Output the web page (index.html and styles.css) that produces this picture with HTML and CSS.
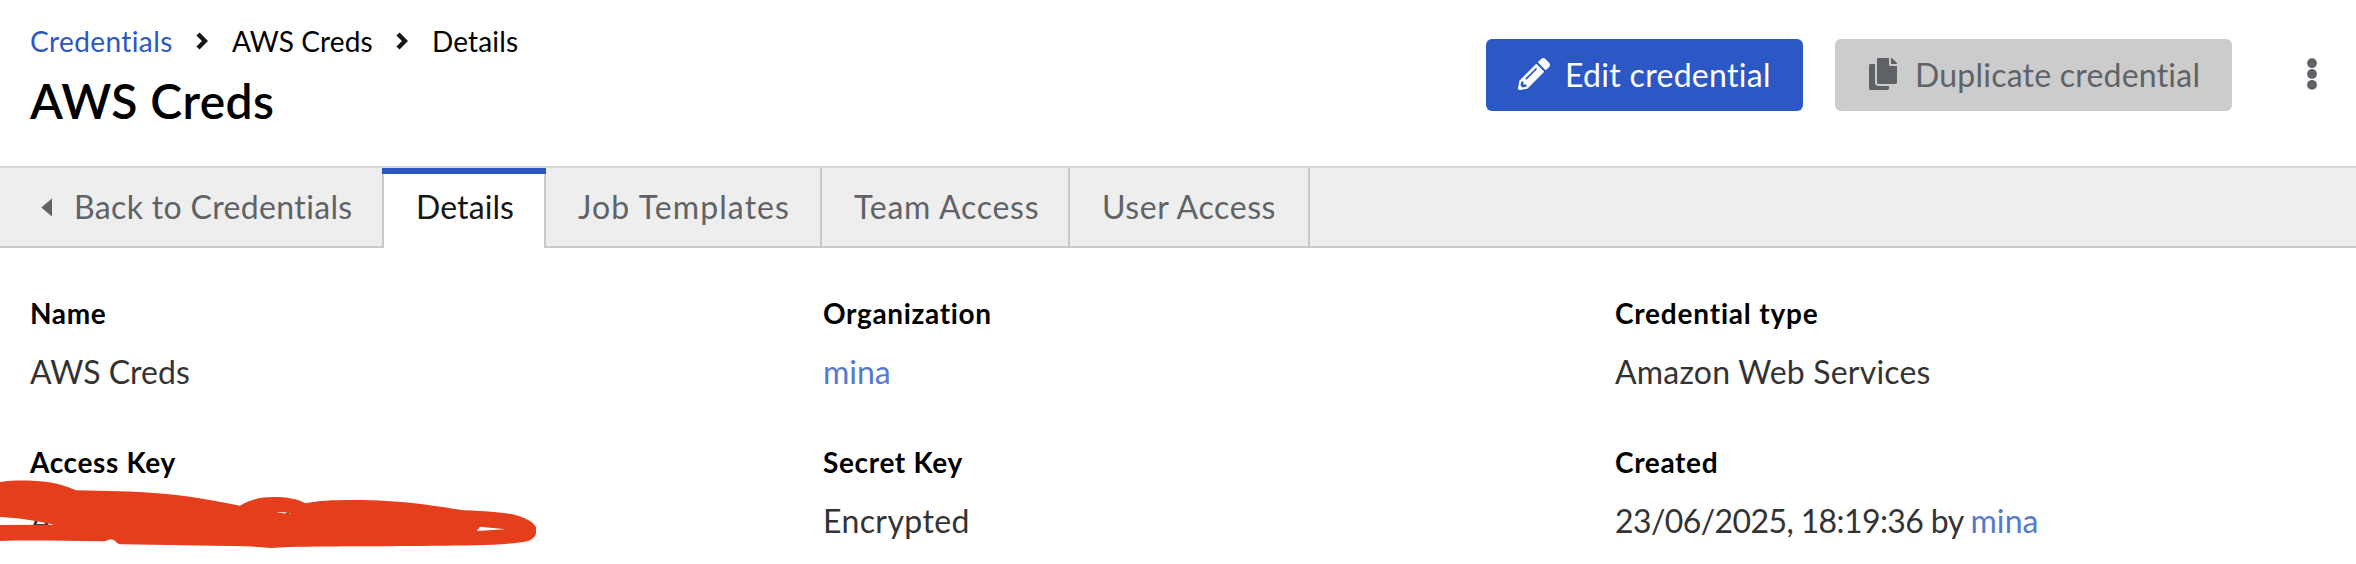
FILE: index.html
```html
<!DOCTYPE html>
<html lang="en">
<head>
<meta charset="utf-8">
<title>AWS Creds</title>
<link rel="stylesheet" href="styles.css">
</head>
<body>
<header class="page-header">
  <div class="heading">
    <nav class="breadcrumb">
      <a class="crumb crumb-link" href="#">Credentials</a>
      <svg class="chevron" viewBox="0 0 12 18"><path d="M2 2l7 7-7 7" fill="none" stroke="#151515" stroke-width="4.4"/></svg>
      <span class="crumb crumb-item">AWS Creds</span>
      <svg class="chevron" viewBox="0 0 12 18"><path d="M2 2l7 7-7 7" fill="none" stroke="#151515" stroke-width="4.4"/></svg>
      <span class="crumb crumb-current">Details</span>
    </nav>
    <h1 class="title"><span class="title-text">AWS Creds</span></h1>
  </div>
  <div class="actions">
    <button class="button button-primary">
      <svg class="icon-pencil" viewBox="0 0 512 512"><path fill="currentColor" d="M497.9 142.1l-46.1 46.1c-4.700 4.700-12.300 4.700-17 0l-111-111c-4.700-4.700-4.700-12.300 0-17l46.100-46.100c18.700-18.700 49.100-18.700 67.900 0l60.100 60.100c18.800 18.700 18.800 49.100 0 67.900zM284.200 99.800L21.600 362.400.4 483.900c-2.900 16.400 11.400 30.600 27.800 27.800l121.500-21.300 262.600-262.600c4.700-4.700 4.700-12.300 0-17l-111-111c-4.800-4.700-12.400-4.700-17.100 0zM124.100 339.900c-5.500-5.500-5.500-14.300 0-19.800l154-154c5.500-5.500 14.300-5.500 19.800 0s5.500 14.300 0 19.800l-154 154c-5.500 5.500-14.300 5.500-19.800 0zM88 424h48v36.300l-64.500 11.300-31.100-31.100L51.700 376H88v48z"/></svg>
      <span class="edit-text">Edit credential</span>
    </button>
    <button class="button button-disabled" disabled>
      <svg class="icon-copy" viewBox="0 0 448 512"><path fill="currentColor" d="M320 448v40c0 13.255-10.745 24-24 24H24c-13.255 0-24-10.745-24-24V120c0-13.255 10.745-24 24-24h72v296c0 30.879 25.121 56 56 56h168zm0-344V0H152c-13.255 0-24 10.745-24 24v368c0 13.255 10.745 24 24 24h272c13.255 0 24-10.745 24-24V128H344c-13.200 0-24-10.800-24-24zm120.971-31.029L375.029 7.029A24 24 0 0 0 358.059 0H352v96h96v-6.059a24 24 0 0 0-7.029-16.970z"/></svg>
      <span class="duplicate-text">Duplicate credential</span>
    </button>
    <svg class="icon-kebab" viewBox="0 0 10 32"><g fill="#5f6368"><circle cx="5" cy="5.200" r="4.900"/><circle cx="5" cy="16" r="4.900"/><circle cx="5" cy="26.800" r="4.900"/></g></svg>
  </div>
</header>
<nav class="tabs">
  <a class="tab tab-back" href="#"><svg class="caret" viewBox="0 0 11 19"><path d="M11 .5v18L.3 9.500z" fill="currentColor"/></svg><span class="back-text">Back to Credentials</span></a>
  <a class="tab tab-details" href="#"><span class="details-text">Details</span></a>
  <a class="tab tab-jobs" href="#"><span class="jobs-text">Job Templates</span></a>
  <a class="tab tab-team" href="#"><span class="team-text">Team Access</span></a>
  <a class="tab tab-user" href="#"><span class="user-text">User Access</span></a>
</nav>
<main class="details">
  <dl class="field"><dt class="label name-label">Name</dt><dd class="value name-value">AWS Creds</dd></dl>
  <dl class="field"><dt class="label org-label">Organization</dt><dd class="value org-value"><a class="link" href="#">mina</a></dd></dl>
  <dl class="field"><dt class="label type-label">Credential type</dt><dd class="value type-value">Amazon Web Services</dd></dl>
  <dl class="field"><dt class="label access-label">Access Key</dt><dd class="value access-value">A
    <svg class="redaction" viewBox="0 0 1568 372" preserveAspectRatio="none"><path fill="#e53e1c" fill-rule="evenodd" d="M0 126C30 121 60 121 90 122C145 124 180 135 213 151C300 153 370 154 440 160C530 167 610 184 672 197C700 178 730 171 768 171C800 171 833 176 855 190C890 182 930 180 990 180C1130 180 1210 197 1300 211C1380 215 1425 218 1455 229C1485 241 1501 254 1501 265V275C1501 291 1488 302 1465 306C1420 313 1380 315 1330 316C1180 319 980 319 860 320C820 320 790 321 760 324C735 322 715 320 690 319L340 313Q331 314 325 306Q320 298 311 298Q303 298 296 303Q290 304 275 304C180 303 90 300 0 303V255L152 254C100 242 55 234 0 231ZM775 217Q795 214 818 223Q800 222 775 217ZM1344 260L1416 268L1335 273Z"/><path fill="#5a2c20" d="M801 218l8 2v3l-8-2z"/></svg></dd></dl>
  <dl class="field"><dt class="label secret-label">Secret Key</dt><dd class="value secret-value">Encrypted</dd></dl>
  <dl class="field"><dt class="label created-label">Created</dt><dd class="value created-value">23/06/2025, 18:19:36 by <a class="link created-link" href="#">mina</a></dd></dl>
</main>
</body>
</html>
```
FILE: styles.css
```css
* { box-sizing: border-box; }
body {
  margin: 0;
  width: 2356px;
  height: 564px;
  overflow: hidden;
  background: #fff;
  color: #000;
  font-family: Lato, "Liberation Sans", sans-serif;
  font-size: 32px;
  line-height: 48px;
  white-space: nowrap;
  font-variant-ligatures: none;
}
a { color: inherit; text-decoration: none; }
svg { display: block; flex: none; }

.page-header { display: flex; justify-content: space-between; height: 166px; padding-left: 30px; }
.breadcrumb { display: flex; align-items: center; height: 42px; margin-top: 20px; font-size: 28px; line-height: 42px; }
.crumb-link { width: 166px; color: #2b58c4; letter-spacing: 0.4px; }
.chevron { width: 12px; height: 18px; }
.crumb-item { width: 188px; padding-left: 24px; letter-spacing: 0.1px; }
.crumb-current { padding-left: 24px; letter-spacing: 0.15px; }
.title { margin: 8px 0 0; font-size: 48px; line-height: 62px; font-weight: 600; letter-spacing: 0.4px; }

.actions { display: flex; gap: 32px; align-items: center; height: 72px; margin-top: 39px; padding-right: 39px; }
.button { display: flex; align-items: center; height: 72px; padding: 0; border: 0; border-radius: 6px; font: inherit; }
.button-primary { width: 317px; padding-left: 32px; gap: 15px; background: #2b58c4; color: #fff; letter-spacing: 0.3px; }
.button-disabled { width: 397px; padding-left: 34px; gap: 18px; background: #ccc; color: #5f6368; letter-spacing: 0.22px; }
.icon-pencil { width: 32px; height: 32px; margin-top: -2px; }
.icon-copy { width: 28px; height: 32px; margin-top: -2px; }
.icon-kebab { width: 10px; height: 32px; margin: -2px 0 0 43px; }

.tabs { display: flex; height: 82px; border-top: 2px solid #d6d6d6; background: linear-gradient(#c9c9c9, #c9c9c9) left bottom / 100% 2px no-repeat #eee; color: #5f6368; }
.tab { display: flex; align-items: flex-start; height: 80px; padding: 15px 0 0 32px; }
.tab-back { width: 382px; padding-left: 41px; gap: 22px; }
.caret { width: 11px; height: 19px; margin-top: 15px; }
.tab-details { position: relative; width: 164px; background: #fff; border: solid #c9c9c9; border-width: 0 2px; color: #151515; }
.tab-details::before { content: ""; position: absolute; top: 0; left: -2px; right: -2px; height: 6px; background: #2b58c4; }
.tab-jobs, .tab-team, .tab-user { border-right: 2px solid #c9c9c9; }
.tab-jobs { width: 276px; }
.tab-team { width: 248px; }
.tab-user { width: 240px; }
.back-text { letter-spacing: 0.35px; }
.details-text { letter-spacing: 0.1px; }
.jobs-text { letter-spacing: 1.1px; }
.team-text { letter-spacing: 0.75px; }
.user-text { letter-spacing: 0.6px; }

.details { display: grid; grid-template-columns: 792px 792px 1fr; grid-auto-rows: 148.500px; padding: 44px 0 0 30px; }
.field { margin: 0; }
.label { height: 42px; font-size: 28px; line-height: 42px; font-weight: 700; letter-spacing: 0.65px; }
.value { margin: 14px 0 0; color: #333; }
.link { color: #5679d0; }
.org-label, .org-value, .type-label, .type-value, .secret-label, .secret-value, .created-label, .created-value { padding-left: 1px; }
.type-label { letter-spacing: 0.8px; }
.type-value { letter-spacing: 0.2px; }
.secret-value { letter-spacing: 0.4px; }
.created-value { letter-spacing: -0.6px; }
.created-link { letter-spacing: 0.1px; }
.access-value { position: relative; }
.redaction { position: absolute; left: -30px; top: -57px; width: 560px; height: 124px; }
```
